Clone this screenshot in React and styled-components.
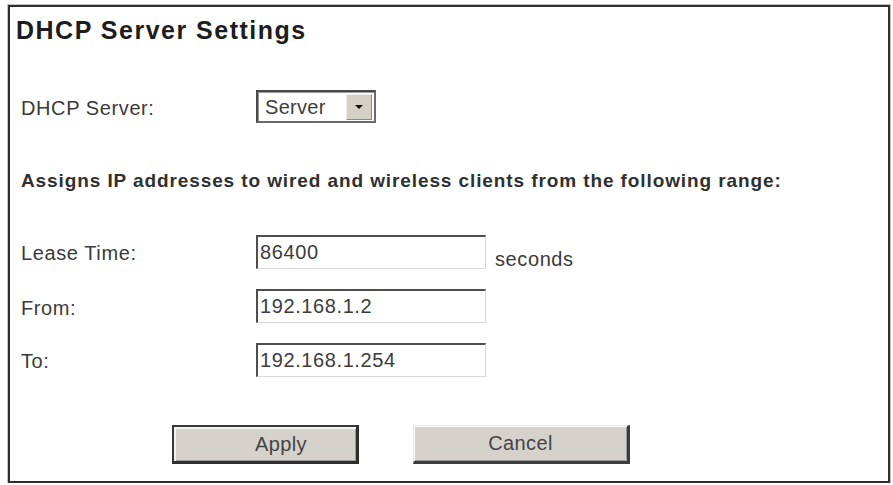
import React from "react";
import styled, { createGlobalStyle } from "styled-components";

const Global = createGlobalStyle`
  html, body { margin: 0; padding: 0; background: #ffffff; }
  body { font-family: "Liberation Sans", Arial, sans-serif; }
`;

const Frame = styled.div`
  box-sizing: border-box;
  margin: 5px 0 0 8px;
  width: 882px;
  height: 478px;
  border: 2px solid #2f2f2f;
  box-shadow: 0 0 0 1px #c4c4c4;
  background: #ffffff;
  display: flex;
  flex-direction: column;
`;

const Title = styled.h1`
  margin: 0;
  padding: 8px 0 0 6px;
  font-size: 25px;
  line-height: 30px;
  font-weight: bold;
  letter-spacing: 1.5px;
  color: #1d1d1d;
`;

const Form = styled.div`
  display: flex;
  flex-direction: column;
  padding-left: 11px;
`;

const Row = styled.div`
  display: flex;
  align-items: center;
  height: ${(p) => p.$h || 34}px;
  margin-top: ${(p) => p.$mt || 0}px;
`;

const Label = styled.span`
  width: 235px;
  flex: none;
  font-size: 20px;
  letter-spacing: 0.6px;
  color: #3a3a3a;
  position: relative;
  top: ${(p) => p.$dy || 0}px;
`;

const Description = styled.p`
  margin: 46px 0 42px 0;
  padding-left: 0;
  font-size: 19px;
  line-height: 24px;
  font-weight: bold;
  letter-spacing: 0.9px;
  color: #303030;
`;

const RowGroup = styled.div`
  display: flex;
  flex-direction: column;
  gap: 20px;
`;

const TextInput = styled.div`
  box-sizing: border-box;
  width: 230px;
  height: 34px;
  flex: none;
  display: flex;
  align-items: center;
  padding-left: 2px;
  border-top: 2px solid #4e4e4e;
  border-left: 2px solid #4e4e4e;
  border-right: 1px solid #d8d8d8;
  border-bottom: 1px solid #d8d8d8;
  background: #ffffff;
  font-size: 20px;
  letter-spacing: 0.6px;
  color: #3c3c3c;
`;

const Unit = styled.span`
  align-self: flex-end;
  margin-left: 9px;
  font-size: 20px;
  line-height: 20px;
  letter-spacing: 0.6px;
  color: #3a3a3a;
`;

const Select = styled.div`
  box-sizing: border-box;
  width: 120px;
  height: 33px;
  flex: none;
  display: flex;
  align-items: stretch;
  border: 2px solid #4a4a4a;
  border-right-color: #6a6a6a;
  border-bottom-color: #6a6a6a;
  box-shadow: inset 1px 1px 0 #9a9a9a;
  background: #ffffff;
  padding: 2px 2px 1px 0;
`;

const SelectValue = styled.span`
  flex: 1;
  display: flex;
  align-items: center;
  padding-left: 7px;
  font-size: 20px;
  letter-spacing: 0.3px;
  color: #3c3c3c;
`;

const ArrowButton = styled.span`
  box-sizing: border-box;
  width: 26px;
  flex: none;
  display: flex;
  align-items: center;
  justify-content: center;
  background: #d4d0c8;
  border-top: 1px solid #eeeeee;
  border-left: 1px solid #eeeeee;
  border-right: 1px solid #8a8a8a;
  border-bottom: 1px solid #8a8a8a;
`;

const Buttons = styled.div`
  display: flex;
  gap: 54px;
  margin-top: 48px;
  padding-left: 162px;
`;

const Button = styled.button`
  box-sizing: border-box;
  width: ${(p) => p.$w}px;
  height: 39px;
  padding: 0 0 0 ${(p) => p.$pl || 0}px;
  margin: 0;
  font-family: "Liberation Sans", Arial, sans-serif;
  font-size: 20px;
  letter-spacing: 0.4px;
  color: #444444;
  background: #d5d2cc;
  border-style: solid;
  border-width: ${(p) => (p.$default ? "2px 3px 3px 2px" : "1px 3px 3px 1px")};
  border-color: ${(p) =>
    p.$default
      ? "#383838 #2e2e2e #2e2e2e #383838"
      : "#e6e6e6 #3c3c3c #3c3c3c #e6e6e6"};
  box-shadow: ${(p) =>
    p.$default
      ? "inset 2px 2px 0 #f2f2f2, inset -1px -1px 0 #9a9a9a"
      : "inset 1px 1px 0 #fafafa, inset -1px -1px 0 #9a9a9a"};
`;

const DownArrow = () => (
  <svg width="10" height="6" viewBox="0 0 10 6">
    <polygon points="1,1 9,1 5,5" fill="#111" />
  </svg>
);

export default function App() {
  return (
    <>
      <Global />
      <Frame>
        <Title>DHCP Server Settings</Title>
        <Form>
          <Row $h={33} $mt={45}>
            <Label $dy={2}>DHCP Server:</Label>
            <Select>
              <SelectValue>Server</SelectValue>
              <ArrowButton>
                <DownArrow />
              </ArrowButton>
            </Select>
          </Row>
          <Description>
            Assigns IP addresses to wired and wireless clients from the following range:
          </Description>
          <RowGroup>
            <Row>
              <Label $dy={1}>Lease Time:</Label>
              <TextInput>86400</TextInput>
              <Unit>seconds</Unit>
            </Row>
            <Row>
              <Label $dy={2}>From:</Label>
              <TextInput>192.168.1.2</TextInput>
            </Row>
            <Row>
              <Label $dy={1}>To:</Label>
              <TextInput>192.168.1.254</TextInput>
            </Row>
          </RowGroup>
        </Form>
        <Buttons>
          <Button $w={187} $default $pl={32}>Apply</Button>
          <Button $w={217}>Cancel</Button>
        </Buttons>
      </Frame>
    </>
  );
}
